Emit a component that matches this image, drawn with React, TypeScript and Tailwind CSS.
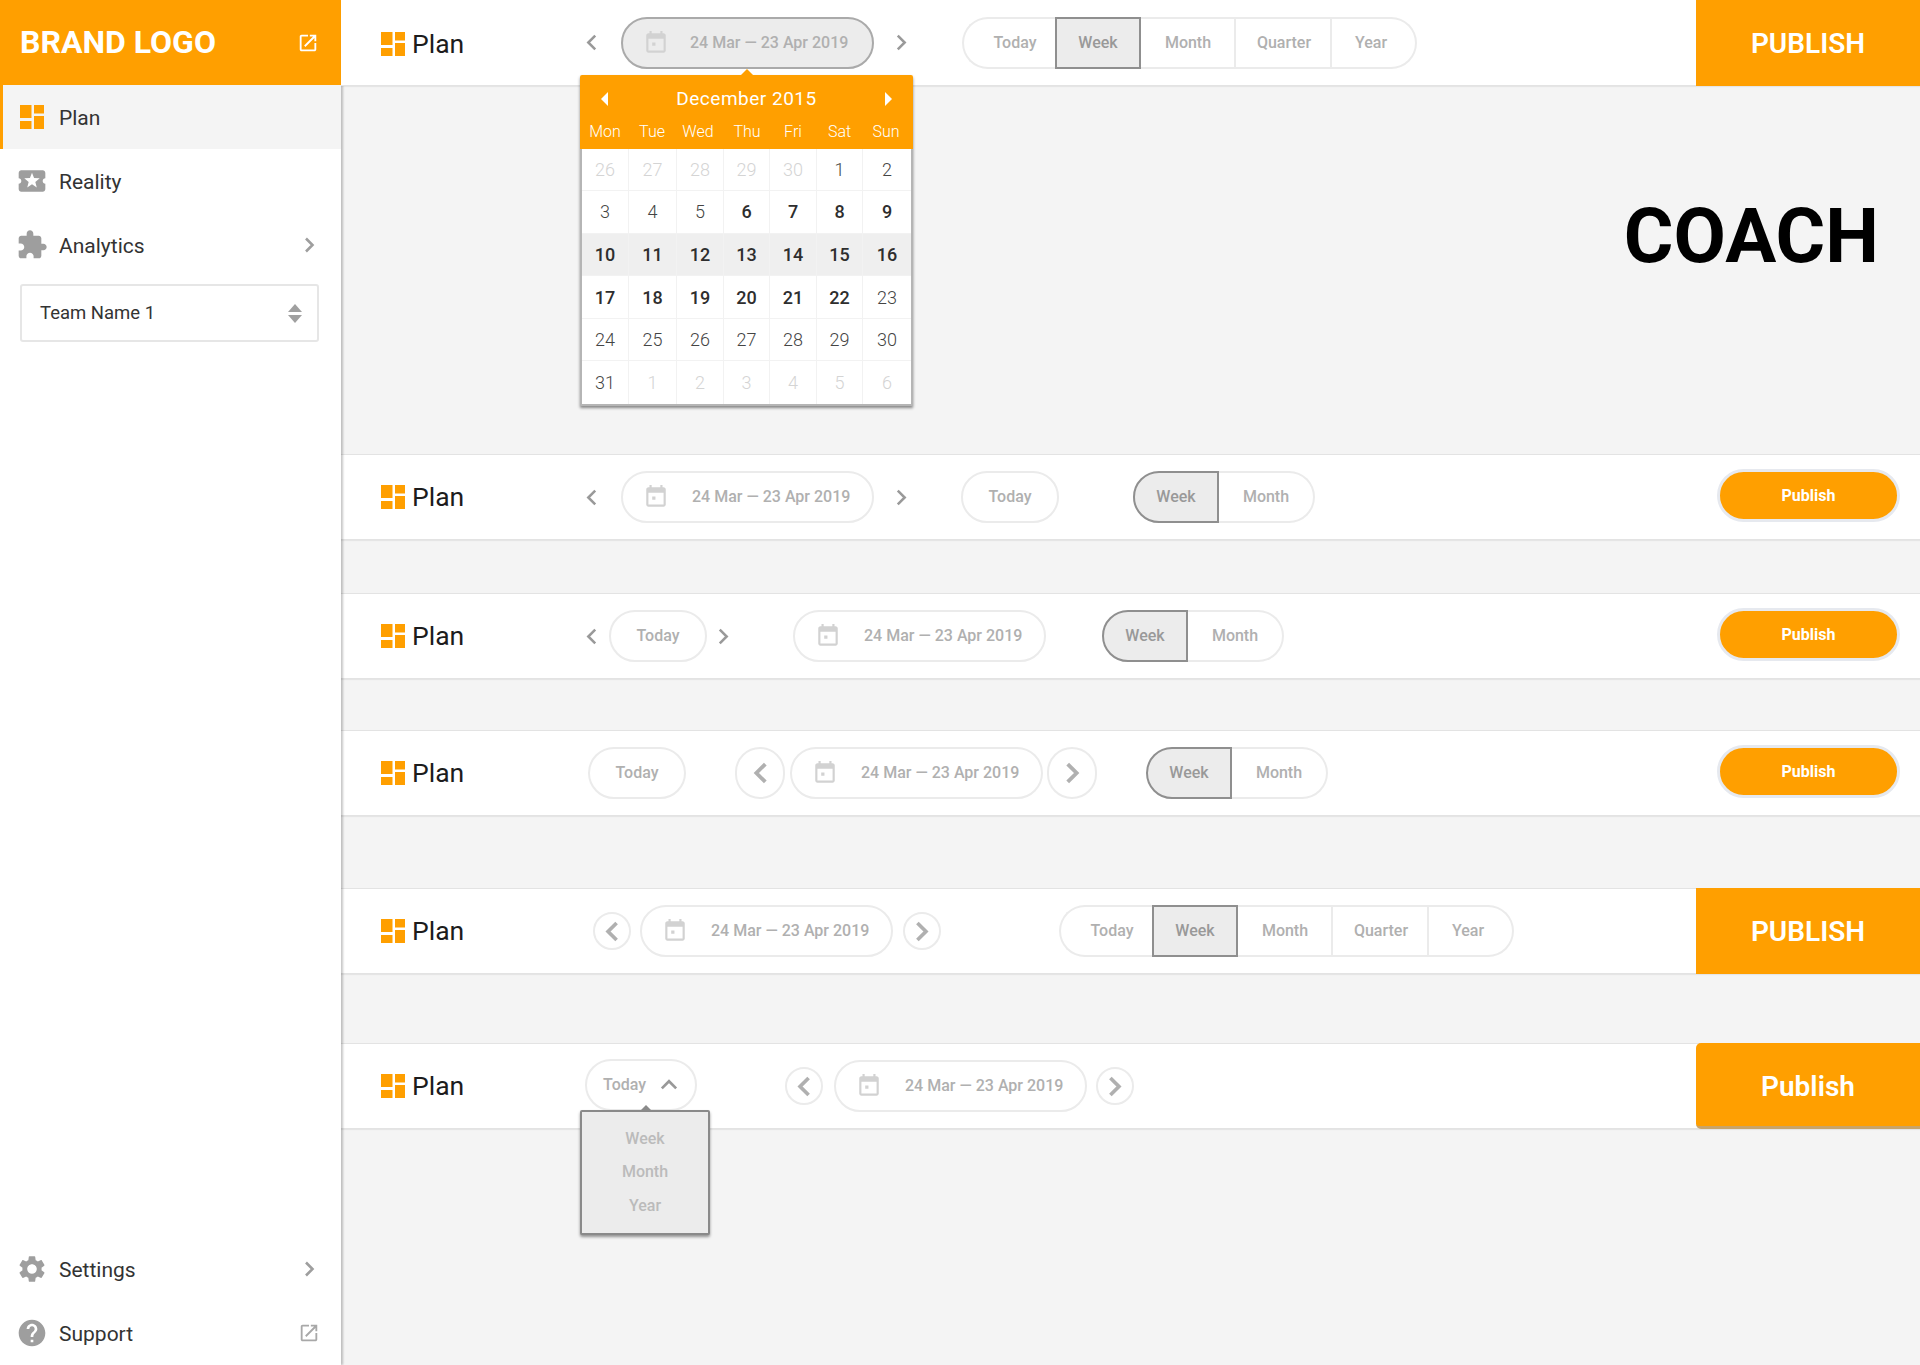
import type { ReactNode } from "react";

const ICONS = {
  openNew:
    "M19 19H5V5h7V3H5c-1.11 0-2 .9-2 2v14c0 1.1.89 2 2 2h14c1.1 0 2-.9 2-2v-7h-2v7zM14 3v2h3.59l-9.83 9.83 1.41 1.41L19 6.41V10h2V3h-7z",
  ticket:
    "M20 12c0-1.1.9-2 2-2V6c0-1.1-.9-2-2-2H4c-1.1 0-1.99.9-1.99 2v4c1.1 0 1.99.9 1.99 2s-.89 2-2 2v4c0 1.1.9 2 2 2h16c1.1 0 2-.9 2-2v-4c-1.1 0-2-.9-2-2zm-4.42 4.8L12 14.5l-3.58 2.3 1.08-4.12-3.29-2.69 4.24-.25L12 5.8l1.54 3.95 4.24.25-3.29 2.69 1.09 4.11z",
  puzzle:
    "M20.5 11H19V7c0-1.1-.9-2-2-2h-4V3.5C13 2.12 11.88 1 10.5 1S8 2.12 8 3.5V5H4c-1.1 0-1.99.9-1.99 2v3.8H3.5c1.49 0 2.7 1.21 2.7 2.7s-1.21 2.7-2.7 2.7H2V20c0 1.1.9 2 2 2h3.8v-1.5c0-1.49 1.21-2.7 2.7-2.7 1.49 0 2.7 1.21 2.7 2.7V22H17c1.1 0 2-.9 2-2v-4h1.5c1.38 0 2.5-1.12 2.5-2.5S21.88 11 20.5 11z",
  gear:
    "M19.14 12.94c.04-.3.06-.61.06-.94 0-.32-.02-.64-.07-.94l2.03-1.58c.18-.14.23-.41.12-.61l-1.92-3.32c-.12-.22-.37-.29-.59-.22l-2.39.96c-.5-.38-1.03-.7-1.62-.94l-.36-2.54c-.04-.24-.24-.41-.48-.41h-3.84c-.24 0-.43.17-.47.41l-.36 2.54c-.59.24-1.13.57-1.62.94l-2.39-.96c-.22-.08-.47 0-.59.22L2.74 8.87c-.12.21-.08.47.12.61l2.03 1.58c-.05.3-.09.63-.09.94s.02.64.07.94l-2.03 1.58c-.18.14-.23.41-.12.61l1.92 3.32c.12.22.37.29.59.22l2.39-.96c.5.38 1.03.7 1.62.94l.36 2.54c.05.24.24.41.48.41h3.84c.24 0 .44-.17.47-.41l.36-2.54c.59-.24 1.13-.56 1.62-.94l2.39.96c.22.08.47 0 .59-.22l1.92-3.32c.12-.22.07-.47-.12-.61l-2.01-1.58zM12 15.6c-1.98 0-3.6-1.62-3.6-3.6s1.62-3.6 3.6-3.6 3.6 1.62 3.6 3.6-1.62 3.6-3.6 3.6z",
  help:
    "M12 2C6.48 2 2 6.48 2 12s4.48 10 10 10 10-4.48 10-10S17.52 2 12 2zm1 17h-2v-2h2v2zm2.07-7.75l-.9.92C13.45 12.9 13 13.5 13 15h-2v-.5c0-1.1.45-2.1 1.17-2.83l1.24-1.26c.37-.36.59-.86.59-1.41 0-1.1-.9-2-2-2s-2 .9-2 2H8c0-2.21 1.79-4 4-4s4 1.79 4 4c0 .88-.36 1.68-.93 2.25z",
  calendar:
    "M11.5 11.5h-3v3h3v-3zM16 1v2H8V1H6v2H5c-1.11 0-1.99.9-1.99 2L3 19c0 1.1.89 2 2 2h14c1.1 0 2-.9 2-2V5c0-1.1-.9-2-2-2h-1V1h-2zm3 18H5V8h14v11z",
};

function Glyph({ d, className }: { d: string; className: string }) {
  return (
    <svg viewBox="0 0 24 24" className={className} fill="currentColor">
      <path d={d} />
    </svg>
  );
}

function PlanMark({ className }: { className: string }) {
  return (
    <svg viewBox="0 0 24 24" className={className} fill="#ff9f00">
      <rect x="0" y="0" width="11.5" height="13" />
      <rect x="0" y="16" width="11.5" height="8" />
      <rect x="14" y="0" width="10" height="8.5" />
      <rect x="14" y="11" width="10" height="13" />
    </svg>
  );
}

function Chevron({ left, className, weight = 2.6 }: { left?: boolean; className: string; weight?: number }) {
  return (
    <svg viewBox="0 0 10 16" className={className} fill="none" stroke="currentColor" strokeWidth={weight}>
      <path d={left ? "M8.5 1.5 2 8l6.5 6.5" : "M1.5 1.5 8 8l-6.5 6.5"} />
    </svg>
  );
}

function NavRow({ icon, label, right, active }: { icon: ReactNode; label: string; right?: ReactNode; active?: boolean }) {
  return (
    <div className={`flex h-16 items-center pr-[20px] ${active ? "bg-[#f4f4f4] border-l-[3px] border-[#ff9f00] pl-[17px]" : "pl-[16px]"}`}>
      <div className={`flex items-center ${active ? "w-[39px]" : "w-[43px]"}`}>{icon}</div>
      <span className="pt-[4px] text-[21px] text-[#333333]">{label}</span>
      <div className="ml-auto flex items-center">{right}</div>
    </div>
  );
}

function Sidebar() {
  return (
    <aside className="relative z-10 flex w-[341px] shrink-0 flex-col">
      <div className="relative z-10 flex h-[85px] items-center justify-between bg-[#ff9f00] pl-[20px] pr-[22px] pb-[1px]">
        <span className="text-[32px] font-bold leading-none text-white">BRAND LOGO</span>
        <Glyph d={ICONS.openNew} className="mt-[1px] h-[22px] w-[22px] text-white" />
      </div>
      <div className="flex flex-1 flex-col bg-white shadow-[2px_0_2px_rgba(0,0,0,0.22)]">
        <NavRow active icon={<PlanMark className="h-6 w-6" />} label="Plan" />
        <NavRow icon={<Glyph d={ICONS.ticket} className="h-8 w-8 text-[#9e9e9e]" />} label="Reality" />
        <NavRow
          icon={<Glyph d={ICONS.puzzle} className="h-8 w-8 text-[#9e9e9e]" />}
          label="Analytics"
          right={<Chevron className="mr-[6px] h-[16px] w-[11px] text-[#9e9e9e]" />}
        />
        <div className="ml-[20px] mr-[22px] mt-[7px] flex h-[58px] items-center justify-between rounded-[3px] border-2 border-[#e6e6e6] pl-[18px] pr-[15px]">
          <span className="pt-[2px] text-[18.5px] text-[#333333]">Team Name 1</span>
          <div className="flex flex-col gap-[3px]">
            <div className="h-0 w-0 border-x-[7px] border-b-[8px] border-x-transparent border-b-[#a0a0a0]" />
            <div className="h-0 w-0 border-x-[7px] border-t-[8px] border-x-transparent border-t-[#a0a0a0]" />
          </div>
        </div>
        <div className="mt-auto">
          <NavRow
            icon={<Glyph d={ICONS.gear} className="h-8 w-8 text-[#9e9e9e]" />}
            label="Settings"
            right={<Chevron className="mr-[6px] h-[16px] w-[11px] text-[#9e9e9e]" />}
          />
          <NavRow
            icon={<Glyph d={ICONS.help} className="h-8 w-8 text-[#9e9e9e]" />}
            label="Support"
            right={<Glyph d={ICONS.openNew} className="mr-[1px] h-[22px] w-[22px] text-[#a8a8a8]" />}
          />
        </div>
      </div>
    </aside>
  );
}

function PlanTitle({ className = "" }: { className?: string }) {
  return (
    <div className={`flex w-[238px] shrink-0 items-center pl-[40px] ${className}`}>
      <PlanMark className="h-6 w-6" />
      <span className="ml-[7px] text-[26.5px] text-[#1c1c1c]">Plan</span>
    </div>
  );
}

function Bar({ children, className = "" }: { children: ReactNode; className?: string }) {
  return (
    <div className={`flex h-[86px] shrink-0 items-center border-y border-[#e3e3e3] bg-white shadow-[0_1px_1px_rgba(0,0,0,0.06)] ${className}`}>
      {children}
    </div>
  );
}

function Arrow({ left, className = "" }: { left?: boolean; className?: string }) {
  return (
    <div className={`flex w-6 shrink-0 justify-center ${className}`}>
      <Chevron left={left} weight={2.4} className="h-[17px] w-[11px] text-[#999999]" />
    </div>
  );
}

function RoundArrow({ left, big, className = "" }: { left?: boolean; big?: boolean; className?: string }) {
  return (
    <div
      className={`flex shrink-0 items-center justify-center rounded-full border-2 border-[#ebebeb] ${big ? "h-[52px] w-[50px]" : "h-[38px] w-[38px]"} ${className}`}
    >
      <Chevron left={left} weight={2.8} className={`text-[#b0b0b0] ${big ? "h-[22px] w-[15px]" : "h-[21px] w-[14px]"}`} />
    </div>
  );
}

function DatePill({ open, className = "", children }: { open?: boolean; className?: string; children?: ReactNode }) {
  return (
    <div
      className={`relative flex h-[52px] w-[253px] shrink-0 items-center rounded-full border-2 pl-[20px] ${open ? "border-[#aaaaaa] bg-[#ececec]" : "border-[#ebebeb]"} ${className}`}
    >
      <Glyph d={ICONS.calendar} className="h-[26px] w-[26px] text-[#d2d2d2]" />
      <span className={`text-[16px] font-medium text-[#b0b0b0] ${open ? "ml-[21px]" : "ml-[23px]"}`}>24 Mar — 23 Apr 2019</span>
      {children}
    </div>
  );
}

function TodayPill({ className = "" }: { className?: string }) {
  return (
    <div className={`flex h-[52px] w-[98px] shrink-0 items-center justify-center rounded-full border-2 border-[#ebebeb] text-[16px] font-medium text-[#b0b0b0] ${className}`}>
      Today
    </div>
  );
}

function Segments({ full, className = "" }: { full?: boolean; className?: string }) {
  const base = "flex h-[52px] items-center justify-center text-[16px] font-medium text-[#b0b0b0]";
  return (
    <div className={`flex shrink-0 ${className}`}>
      {full && <div className={`${base} w-[93px] rounded-l-full border-y-2 border-l-2 border-[#ebebeb] pl-[11px]`}>Today</div>}
      <div
        className={`flex h-[52px] w-[86px] items-center justify-center border-2 border-[#8f8f8f] bg-[#ececec] text-[16px] font-medium text-[#999999] ${full ? "" : "rounded-l-full"}`}
      >
        Week
      </div>
      {full ? (
        <>
          <div className={`${base} w-[95px] border-y-2 border-r-2 border-[#ebebeb] pl-[1px]`}>Month</div>
          <div className={`${base} w-[96px] border-y-2 border-r-2 border-[#ebebeb] pl-[2px]`}>Quarter</div>
          <div className={`${base} w-[85px] rounded-r-full border-y-2 border-r-2 border-[#ebebeb] pr-[5px]`}>Year</div>
        </>
      ) : (
        <div className={`${base} w-[96px] rounded-r-full border-y-2 border-r-2 border-[#ebebeb]`}>Month</div>
      )}
    </div>
  );
}

function BigPublish({ children, className = "" }: { children: ReactNode; className?: string }) {
  return (
    <div className={`ml-auto flex h-[86px] w-[224px] shrink-0 items-center justify-center bg-[#ff9f00] font-semibold text-white ${className}`}>
      {children}
    </div>
  );
}

function PillPublish() {
  return (
    <div className="mb-[3px] ml-auto mr-[20px] flex h-[53px] w-[183px] items-center justify-center rounded-full border-[3px] border-[#e6e9ef] bg-[#ff9f00] text-[16px] font-bold text-white">
      Publish
    </div>
  );
}

type Tone = "off" | "norm" | "bold";
const WEEKS: [number, Tone][][] = [
  [[26, "off"], [27, "off"], [28, "off"], [29, "off"], [30, "off"], [1, "norm"], [2, "norm"]],
  [[3, "norm"], [4, "norm"], [5, "norm"], [6, "bold"], [7, "bold"], [8, "bold"], [9, "bold"]],
  [[10, "bold"], [11, "bold"], [12, "bold"], [13, "bold"], [14, "bold"], [15, "bold"], [16, "bold"]],
  [[17, "bold"], [18, "bold"], [19, "bold"], [20, "bold"], [21, "bold"], [22, "bold"], [23, "norm"]],
  [[24, "norm"], [25, "norm"], [26, "norm"], [27, "norm"], [28, "norm"], [29, "norm"], [30, "norm"]],
  [[31, "norm"], [1, "off"], [2, "off"], [3, "off"], [4, "off"], [5, "off"], [6, "off"]],
];
const TONES: Record<Tone, string> = {
  off: "font-light text-[#d4d4d4]",
  norm: "font-light text-[#444444]",
  bold: "font-medium text-[#2e2e2e]",
};

function Calendar() {
  return (
    <div className="absolute left-[-43px] top-[56px] z-20 w-[333px] rounded-t-[2px] bg-white shadow-[0_2px_3px_rgba(0,0,0,0.45)]">
      <div className="absolute left-[160px] top-[-6px] h-0 w-0 border-x-[7px] border-b-[7px] border-x-transparent border-b-[#ff9f00]" />
      <div className="h-[74px] rounded-t-[2px] bg-[#ff9f00] text-white">
        <div className="flex h-[46px] items-center justify-between px-[21px] pt-[3px]">
          <div className="h-0 w-0 border-y-[7px] border-r-[7px] border-y-transparent border-r-white" />
          <span className="text-[19px] tracking-[0.5px]">December 2015</span>
          <div className="h-0 w-0 border-y-[7px] border-l-[7px] border-y-transparent border-l-white" />
        </div>
        <div className="grid grid-cols-[50px_44px_48px_50px_42px_51px_42px] pt-[2px] text-center text-[16px] font-light leading-[18px]">
          {["Mon", "Tue", "Wed", "Thu", "Fri", "Sat", "Sun"].map((d) => (
            <span key={d}>{d}</span>
          ))}
        </div>
      </div>
      <div className="border-x-2 border-b-2 border-[#b5b5b5]">
        {WEEKS.map((week, i) => (
          <div
            key={i}
            className={`grid h-[42.6px] grid-cols-[47px_48px_47px_46px_47px_46px_48px] border-b border-[#f2f2f2] last:border-b-0 ${i === 2 ? "bg-[#efefef]" : ""}`}
          >
            {week.map(([n, tone], j) => (
              <div key={j} className={`flex items-center justify-center border-r border-[#f2f2f2] text-[18px] last:border-r-0 ${TONES[tone]}`}>
                {n}
              </div>
            ))}
          </div>
        ))}
      </div>
    </div>
  );
}

function TodayMenu() {
  return (
    <div className="relative mb-[3px] ml-[6px] flex h-[52px] w-[112px] shrink-0 items-center rounded-full border-2 border-[#ebebeb] pl-[16px] text-[16px] font-medium text-[#b0b0b0]">
      Today
      <svg viewBox="0 0 16 10" className="ml-[14px] h-[11px] w-[18px] text-[#999999]" fill="none" stroke="currentColor" strokeWidth="2.4">
        <path d="M1.5 8.5 8 2l6.5 6.5" />
      </svg>
      <div className="absolute left-[-7px] top-[49px] z-20 flex h-[125px] w-[130px] flex-col items-center rounded-[2px] border-2 border-[#8a8a8a] bg-[#ececec] pt-[10px] text-[16px] font-medium leading-[33.5px] text-[#bbbbbb] shadow-[0_2px_3px_rgba(0,0,0,0.4)]">
        <div className="absolute left-[58px] top-[-7px] h-0 w-0 border-x-[6px] border-b-[6px] border-x-transparent border-b-[#8a8a8a]" />
        <span>Week</span>
        <span>Month</span>
        <span>Year</span>
      </div>
    </div>
  );
}

export default function App() {
  return (
    <div className="flex h-[1365px] w-[1920px] overflow-hidden bg-[#f4f4f4] font-['Roboto',sans-serif]">
      <Sidebar />
      <main className="flex min-w-0 flex-1 flex-col">
        <Bar className="relative z-10 border-t-0">
          <PlanTitle className="pt-[2px]" />
          <Arrow left />
          <DatePill open className="ml-[18px]">
            <Calendar />
          </DatePill>
          <Arrow className="ml-[15px]" />
          <Segments full className="ml-[49px]" />
          <BigPublish className="pt-[3px] text-[28px]">PUBLISH</BigPublish>
        </Bar>

        <div className="flex h-[368px] shrink-0 items-start justify-end pr-[41px] pt-[112px]">
          <span className="text-[76px] font-bold leading-none text-black">COACH</span>
        </div>

        <Bar>
          <PlanTitle />
          <Arrow left />
          <DatePill className="ml-[18px]" />
          <Arrow className="ml-[15px]" />
          <TodayPill className="ml-[48px]" />
          <Segments className="ml-[74px]" />
          <PillPublish />
        </Bar>

        <Bar className="mt-[53px]">
          <PlanTitle />
          <Arrow left />
          <TodayPill className="ml-[6px]" />
          <Arrow className="ml-[4px]" />
          <DatePill className="ml-[58px]" />
          <Segments className="ml-[56px]" />
          <PillPublish />
        </Bar>

        <Bar className="mt-[51px]">
          <PlanTitle />
          <TodayPill className="ml-[9px]" />
          <RoundArrow left big className="ml-[49px]" />
          <DatePill className="ml-[5px]" />
          <RoundArrow big className="ml-[4px]" />
          <Segments className="ml-[49px]" />
          <PillPublish />
        </Bar>

        <Bar className="mt-[72px]">
          <PlanTitle />
          <RoundArrow left className="ml-[14px]" />
          <DatePill className="ml-[9px]" />
          <RoundArrow className="ml-[10px]" />
          <Segments full className="ml-[118px]" />
          <BigPublish className="pt-[1px] text-[28px]">PUBLISH</BigPublish>
        </Bar>

        <Bar className="mt-[69px]">
          <PlanTitle />
          <TodayMenu />
          <RoundArrow left className="ml-[88px]" />
          <DatePill className="ml-[11px]" />
          <RoundArrow className="ml-[9px]" />
          <BigPublish className="rounded-[5px] rounded-r-none border-b-[3px] border-[#c9a468] pt-[4px] text-[28px]">Publish</BigPublish>
        </Bar>
      </main>
    </div>
  );
}
